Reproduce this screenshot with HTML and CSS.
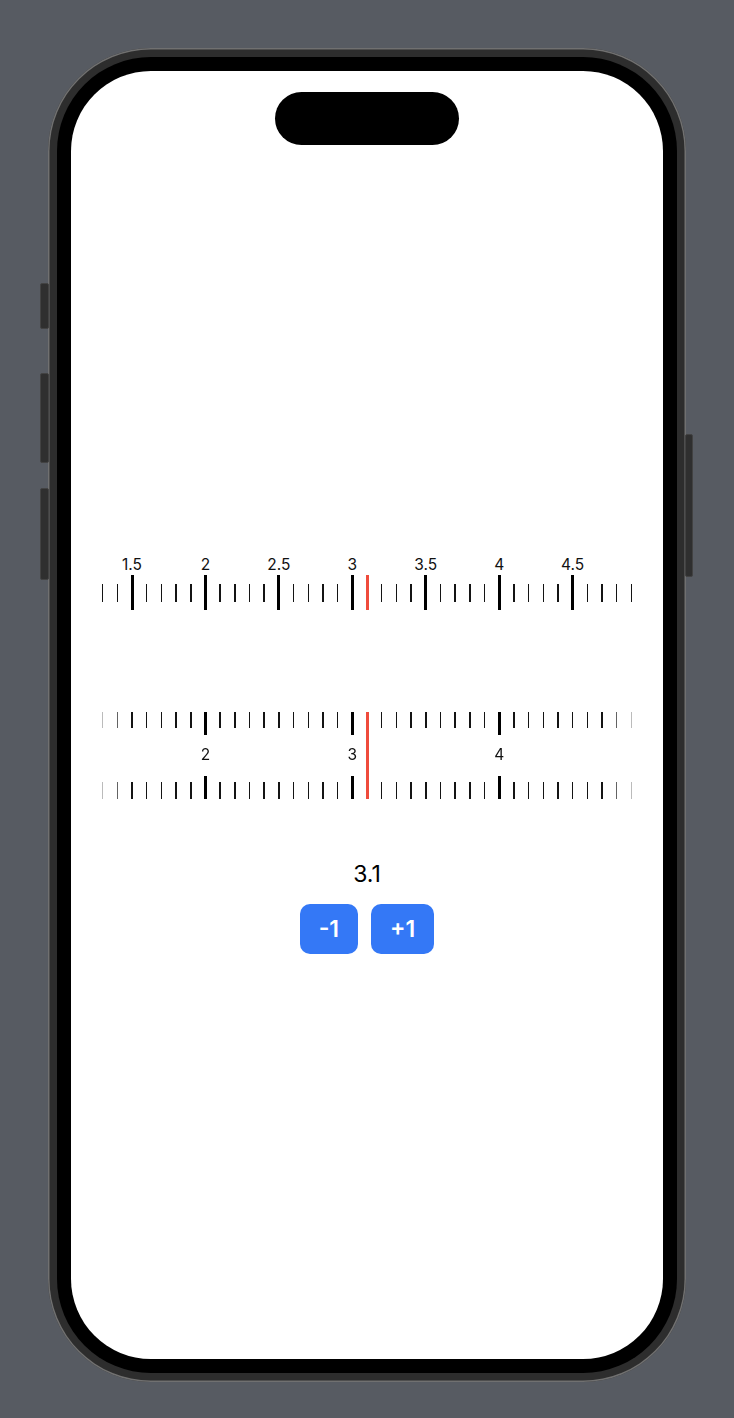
FILE: index.html
```html
<!DOCTYPE html>
<html lang="en">
<head>
<meta charset="utf-8">
<title>Ruler</title>
<link rel="stylesheet" href="styles.css">
</head>
<body>
<div class="phone">
  <span class="side-btn action"></span>
  <span class="side-btn vol-up"></span>
  <span class="side-btn vol-down"></span>
  <span class="side-btn power"></span>
  <div class="bezel">
    <div class="screen">
      <div class="island"></div>

      <div class="ruler ruler-one">
        <div class="cells">
          <div class="cell"><i class="tk"></i></div>
          <div class="cell"><i class="tk"></i></div>
          <div class="cell"><b class="lbl">1.5</b><i class="tk major"></i></div>
          <div class="cell"><i class="tk"></i></div>
          <div class="cell"><i class="tk"></i></div>
          <div class="cell"><i class="tk"></i></div>
          <div class="cell"><i class="tk"></i></div>
          <div class="cell"><b class="lbl">2</b><i class="tk major"></i></div>
          <div class="cell"><i class="tk"></i></div>
          <div class="cell"><i class="tk"></i></div>
          <div class="cell"><i class="tk"></i></div>
          <div class="cell"><i class="tk"></i></div>
          <div class="cell"><b class="lbl">2.5</b><i class="tk major"></i></div>
          <div class="cell"><i class="tk"></i></div>
          <div class="cell"><i class="tk"></i></div>
          <div class="cell"><i class="tk"></i></div>
          <div class="cell"><i class="tk"></i></div>
          <div class="cell"><b class="lbl">3</b><i class="tk major"></i></div>
          <div class="cell"><i class="tk"></i></div>
          <div class="cell"><i class="tk"></i></div>
          <div class="cell"><i class="tk"></i></div>
          <div class="cell"><i class="tk"></i></div>
          <div class="cell"><b class="lbl">3.5</b><i class="tk major"></i></div>
          <div class="cell"><i class="tk"></i></div>
          <div class="cell"><i class="tk"></i></div>
          <div class="cell"><i class="tk"></i></div>
          <div class="cell"><i class="tk"></i></div>
          <div class="cell"><b class="lbl">4</b><i class="tk major"></i></div>
          <div class="cell"><i class="tk"></i></div>
          <div class="cell"><i class="tk"></i></div>
          <div class="cell"><i class="tk"></i></div>
          <div class="cell"><i class="tk"></i></div>
          <div class="cell"><b class="lbl">4.5</b><i class="tk major"></i></div>
          <div class="cell"><i class="tk"></i></div>
          <div class="cell"><i class="tk"></i></div>
          <div class="cell"><i class="tk"></i></div>
          <div class="cell"><i class="tk"></i></div>
        </div>
        <span class="needle"></span>
      </div>

      <div class="ruler ruler-two">
        <div class="cells">
          <div class="cell"><i class="tk top"></i><i class="tk bot"></i></div>
          <div class="cell"><i class="tk top"></i><i class="tk bot"></i></div>
          <div class="cell"><i class="tk top"></i><i class="tk bot"></i></div>
          <div class="cell"><i class="tk top"></i><i class="tk bot"></i></div>
          <div class="cell"><i class="tk top"></i><i class="tk bot"></i></div>
          <div class="cell"><i class="tk top"></i><i class="tk bot"></i></div>
          <div class="cell"><i class="tk top"></i><i class="tk bot"></i></div>
          <div class="cell"><i class="tk top major"></i><b class="lbl">2</b><i class="tk bot major"></i></div>
          <div class="cell"><i class="tk top"></i><i class="tk bot"></i></div>
          <div class="cell"><i class="tk top"></i><i class="tk bot"></i></div>
          <div class="cell"><i class="tk top"></i><i class="tk bot"></i></div>
          <div class="cell"><i class="tk top"></i><i class="tk bot"></i></div>
          <div class="cell"><i class="tk top"></i><i class="tk bot"></i></div>
          <div class="cell"><i class="tk top"></i><i class="tk bot"></i></div>
          <div class="cell"><i class="tk top"></i><i class="tk bot"></i></div>
          <div class="cell"><i class="tk top"></i><i class="tk bot"></i></div>
          <div class="cell"><i class="tk top"></i><i class="tk bot"></i></div>
          <div class="cell"><i class="tk top major"></i><b class="lbl">3</b><i class="tk bot major"></i></div>
          <div class="cell"><i class="tk top"></i><i class="tk bot"></i></div>
          <div class="cell"><i class="tk top"></i><i class="tk bot"></i></div>
          <div class="cell"><i class="tk top"></i><i class="tk bot"></i></div>
          <div class="cell"><i class="tk top"></i><i class="tk bot"></i></div>
          <div class="cell"><i class="tk top"></i><i class="tk bot"></i></div>
          <div class="cell"><i class="tk top"></i><i class="tk bot"></i></div>
          <div class="cell"><i class="tk top"></i><i class="tk bot"></i></div>
          <div class="cell"><i class="tk top"></i><i class="tk bot"></i></div>
          <div class="cell"><i class="tk top"></i><i class="tk bot"></i></div>
          <div class="cell"><i class="tk top major"></i><b class="lbl">4</b><i class="tk bot major"></i></div>
          <div class="cell"><i class="tk top"></i><i class="tk bot"></i></div>
          <div class="cell"><i class="tk top"></i><i class="tk bot"></i></div>
          <div class="cell"><i class="tk top"></i><i class="tk bot"></i></div>
          <div class="cell"><i class="tk top"></i><i class="tk bot"></i></div>
          <div class="cell"><i class="tk top"></i><i class="tk bot"></i></div>
          <div class="cell"><i class="tk top"></i><i class="tk bot"></i></div>
          <div class="cell"><i class="tk top"></i><i class="tk bot"></i></div>
          <div class="cell"><i class="tk top"></i><i class="tk bot"></i></div>
          <div class="cell"><i class="tk top"></i><i class="tk bot"></i></div>
        </div>
        <span class="needle"></span>
      </div>

      <div class="value">3.1</div>

      <div class="actions">
        <button class="btn" type="button">-1</button>
        <button class="btn" type="button">+1</button>
      </div>
    </div>
  </div>
</div>
</body>
</html>
```
FILE: styles.css
```css
* {
  box-sizing: border-box;
}

html,
body {
  margin: 0;
  padding: 0;
}

body {
  background: #575b62;
  font-family: Inter, "Liberation Sans", sans-serif;
  width: 734px;
  height: 1418px;
  overflow: hidden;
}

/* ---------- device frame ---------- */
.phone {
  position: relative;
  width: 638px;
  height: 1334px;
  margin: 48px auto 0;
  padding: 9px;
  border-radius: 103px;
  background: #2d2d2d;
  box-shadow: inset 0 0 0 1.5px #707070;
}

.bezel {
  height: 100%;
  padding: 14px;
  border-radius: 94px;
  background: #000;
}

.screen {
  height: 100%;
  border-radius: 80px;
  background: #fff;
  display: flex;
  flex-direction: column;
  align-items: center;
  overflow: hidden;
}

.side-btn {
  position: absolute;
  background: #2f2f2f;
  border: 1px solid #424242;
  border-radius: 2px;
}

.side-btn.action {
  left: -8px;
  top: 235px;
  width: 9px;
  height: 46px;
}

.side-btn.vol-up {
  left: -8px;
  top: 325px;
  width: 9px;
  height: 90px;
}

.side-btn.vol-down {
  left: -8px;
  top: 440px;
  width: 9px;
  height: 92px;
}

.side-btn.power {
  right: -7px;
  top: 386px;
  width: 8px;
  height: 143px;
}

.island {
  margin-top: 21px;
  width: 184px;
  height: 53px;
  border-radius: 27px;
  background: #000;
  flex: none;
}

/* ---------- rulers ---------- */
.ruler {
  position: relative;
  flex: none;
}

.cells {
  display: flex;
}

.cell {
  width: 14.7px;
  flex: none;
  display: grid;
  grid-template-columns: minmax(0, 1fr);
  justify-items: center;
}

.tk {
  display: block;
  width: 1.5px;
  background: #141414;
}

.tk.major {
  width: 3px;
  background: #000;
}

.lbl {
  width: 0;
  display: flex;
  justify-content: center;
  font-weight: 400;
  font-size: 15.5px;
  line-height: 18px;
  color: #111;
  white-space: nowrap;
}

.needle {
  position: absolute;
  left: calc(50% - 1.5px);
  width: 3px;
  background: #ef4b3c;
}

/* ruler one: labels above centred ticks */
.ruler-one {
  margin-top: 411px;
}

.ruler-one .cell {
  grid-template-rows: 18px 35px;
  row-gap: 1px;
  align-items: center;
}

.ruler-one .lbl {
  grid-row: 1;
}

.ruler-one .tk {
  grid-row: 2;
  height: 18px;
}

.ruler-one .tk.major {
  height: 35px;
}

.ruler-one .needle {
  top: 19px;
  height: 35px;
}

/* ruler two: ticks top and bottom, labels between */
.ruler-two {
  margin-top: 102px;
}

.ruler-two .cells {
  -webkit-mask-image: linear-gradient(to right, rgba(0, 0, 0, 0.1) 0, #000 36px, #000 calc(100% - 36px), rgba(0, 0, 0, 0.1) 100%);
  mask-image: linear-gradient(to right, rgba(0, 0, 0, 0.1) 0, #000 36px, #000 calc(100% - 36px), rgba(0, 0, 0, 0.1) 100%);
}

.ruler-two .cell {
  grid-template-rows: 23px 11px 18px 12px 23px;
}

.ruler-two .tk.top {
  grid-row: 1;
  align-self: start;
  height: 16px;
}

.ruler-two .lbl {
  grid-row: 3;
}

.ruler-two .tk.bot {
  grid-row: 5;
  align-self: end;
  height: 17px;
}

.ruler-two .tk.major {
  height: 23px;
}

.ruler-two .needle {
  top: 0;
  height: 87px;
}

/* ---------- value + buttons ---------- */
.value {
  margin-top: 61px;
  font-size: 23px;
  line-height: 28px;
  color: #000;
  font-weight: 400;
}

.actions {
  margin-top: 16px;
  display: flex;
  gap: 13px;
}

.btn {
  height: 50px;
  padding: 0 19px;
  border: 0;
  border-radius: 10px;
  background: #3478f6;
  color: #fff;
  font-family: Inter, "Liberation Sans", sans-serif;
  font-size: 23px;
  font-weight: 600;
}
```
